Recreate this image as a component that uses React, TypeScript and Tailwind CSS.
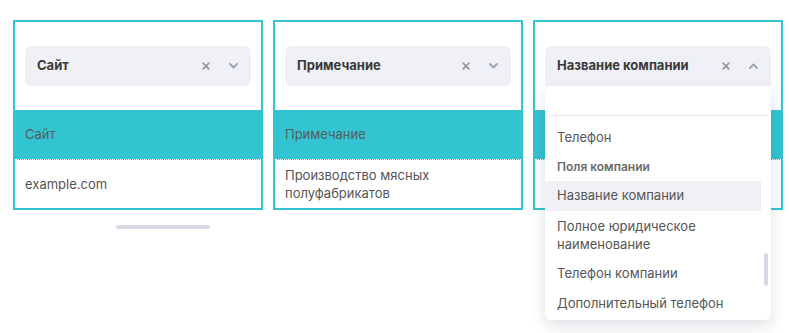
import React from 'react';

interface ColumnProps {
  field: string;
  value: string;
  open?: boolean;
}

const teal = 'bg-[#33c4d1]';

function ClearIcon() {
  return (
    <svg width="8" height="8" viewBox="0 0 8 8" className="shrink-0">
      <path d="M1.2 1.2L6.8 6.8M6.8 1.2L1.2 6.8" stroke="#9a9da6" strokeWidth="1.9" strokeLinecap="round" />
    </svg>
  );
}

function Chevron({ up = false }: { up?: boolean }) {
  return (
    <svg width="9" height="6" viewBox="0 0 9 6" className="shrink-0">
      <path
        d={up ? 'M1 5L4.5 1.5L8 5' : 'M1 1L4.5 4.5L8 1'}
        fill="none"
        stroke="#98a1b3"
        strokeWidth="1.8"
        strokeLinecap="round"
        strokeLinejoin="round"
      />
    </svg>
  );
}

function Dropdown() {
  return (
    <div className="absolute left-[10px] top-[64px] w-[226px] h-[234px] bg-white rounded-b-md shadow-[0_6px_16px_rgba(30,40,70,0.14)] z-10 flex flex-col">
      <div className="h-[30px] mx-1 border-b border-[#e6e7ec]" />
      <div className="relative flex-1 overflow-hidden pt-[7px] pr-[10px]">
        <div className="h-[30px] pl-3 flex items-center text-[#555]">Телефон</div>
        <div className="h-[28px] pl-3 flex items-center text-[12px] font-semibold text-[#6b6b6b]">Поля компании</div>
        <div className="h-[30px] pl-3 flex items-center text-[#555] bg-[#f0f1f6]">Название компании</div>
        <div className="py-[6px] pl-3 leading-[18px] text-[#555]">Полное юридическое<br />наименование</div>
        <div className="h-[30px] pl-3 flex items-center text-[#555]">Телефон компании</div>
        <div className="h-[30px] pl-3 flex items-center text-[#555]">Дополнительный телефон</div>
        <div className="absolute right-[3px] top-[137px] w-1 h-[33px] rounded-full bg-[#d5d9e4]" />
      </div>
    </div>
  );
}

function Column({ field, value, open = false }: ColumnProps) {
  return (
    <div className="relative w-[250px] h-[190px] border-2 border-[#33c4d1] flex flex-col shrink-0">
      <div className="h-[88px] px-[10px] flex items-center bg-white">
        <div
          className={`w-full h-10 bg-[#f0f1f6] flex items-center pl-3 pr-[13px] ${open ? 'rounded-t-md' : 'rounded-md'}`}
        >
          <span className="flex-1 font-bold text-[#3a3a3a]">{field}</span>
          <ClearIcon />
          <span className="w-[19px]" />
          <Chevron up={open} />
        </div>
      </div>
      <div className={`h-[50px] ${teal} px-[10px] flex items-center text-[#555c60] border-b border-dotted border-white`}>
        {open ? '' : field}
      </div>
      <div className="flex-1 px-[10px] flex items-center text-[#555] leading-[18px]">{value}</div>
      {open && <Dropdown />}
    </div>
  );
}

export default function App() {
  return (
    <div className="w-[789px] h-[333px] bg-white pt-5 pl-[13px] text-[13px] font-['Inter',sans-serif]">
      <div className="flex gap-[10px]">
        <Column field="Сайт" value="example.com" />
        <Column field="Примечание" value="Производство мясных полуфабрикатов" />
        <Column field="Название компании" value="" open />
      </div>
      <div className="ml-[103px] mt-[15px] w-[94px] h-1 rounded-full bg-[#d8dbe5]" />
    </div>
  );
}
